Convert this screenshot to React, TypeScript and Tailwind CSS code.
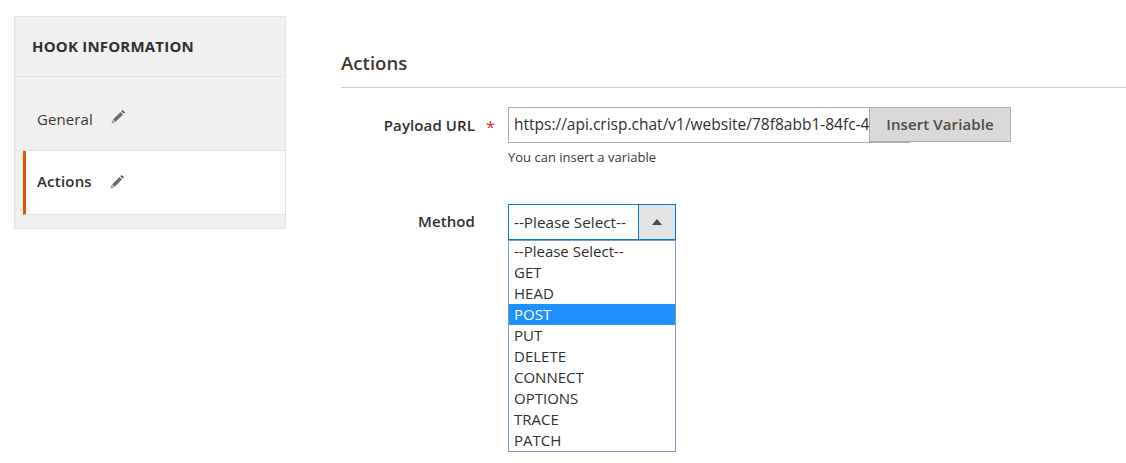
const methods = ['--Please Select--', 'GET', 'HEAD', 'POST', 'PUT', 'DELETE', 'CONNECT', 'OPTIONS', 'TRACE', 'PATCH'];

function Pencil() {
  return (
    <svg width="16" height="16" viewBox="0 0 16 16" className="shrink-0">
      <path d="M12.6 1l2.4 2.4-1.2 1.2-2.4-2.4z" fill="#514943" />
      <path d="M10.6 3l2.4 2.4-7.6 7.6-2.4-2.4z" fill="#6e6a66" />
      <path d="M2.6 11l2.4 2.4-3.6 1.2z" fill="#9a9794" />
    </svg>
  );
}

export default function App() {
  return (
    <div className="w-[1126px] h-[463px] overflow-hidden bg-white flex items-start font-['Open_Sans',sans-serif] text-[#303030]">
      {/* Sidebar */}
      <aside className="w-[272px] ml-[14px] mt-[16px] shrink-0 bg-[#f0f0f0] border border-[#e3e3e3] pb-[13px]">
        <div className="h-[60px] border-b border-[#e3e3e3] pl-[17px] flex items-center">
          <span className="text-[15px] font-bold tracking-[0.2px] text-[#303030]">HOOK INFORMATION</span>
        </div>
        <div className="h-[74px] pl-[22px] pt-[32px] flex items-start gap-[17px] border-b border-[#e3e3e3]">
          <span className="text-[15px] leading-[21px] tracking-[0.1px] text-[#41362f]">General</span>
          <Pencil />
        </div>
        <div className="h-[64px] ml-[8px] bg-white border-l-[3px] border-[#eb5202] border-b border-b-[#e3e3e3] pl-[11px] pb-[2px] flex items-center gap-[17px]">
          <span className="text-[15px] font-semibold tracking-[0.2px] text-[#303030]">Actions</span>
          <Pencil />
        </div>
      </aside>

      {/* Main */}
      <main className="ml-[55px] flex-1 pt-[49px]">
        <h2 className="text-[18.6px] leading-[28px] font-semibold text-[#41362f] h-[39px] border-b border-[#cccccc]">Actions</h2>

        <div className="flex mt-[19px]">
          <label className="w-[134px] text-right text-[15px] tracking-[0.1px] font-semibold leading-[36px] text-[#303030]">Payload URL</label>
          <span className="w-[33px] pl-[11px] text-[#e22626] text-[16px] leading-[40px]">*</span>
          <div>
            <div className="relative w-[402px] h-[36px] border border-[#adadad] bg-white pl-[5px] text-[15.5px] leading-[33px] text-[#303030] whitespace-nowrap">
              <span className="block w-[356px] overflow-hidden">https://api.crisp.chat/v1/website/78f8abb1-84fc-4e</span>
              <button className="absolute left-[360px] -top-[1px] w-[142px] h-[35px] bg-[#d9d9d9] border border-[#adadad] text-[15px] font-semibold text-[#514943] tracking-[0.1px]">
                Insert Variable
              </button>
            </div>
            <p className="text-[13px] leading-[17px] text-[#41362f] mt-[6px]">You can insert a variable</p>
          </div>
        </div>

        <div className="flex mt-[38px]">
          <label className="w-[134px] text-right text-[15px] tracking-[0.1px] font-semibold leading-[34px] text-[#303030]">Method</label>
          <div className="ml-[33px] relative w-[168px]">
            <div className="h-[36px] flex border border-[#007bdb] bg-white">
              <span className="flex-1 pl-[5px] text-[15.3px] leading-[34px] text-[#303030]">--Please Select--</span>
              <span className="w-[37px] bg-[#e3e3e3] border-l border-[#007bdb] flex items-center justify-center">
                <span className="w-0 h-0 border-x-[5px] border-x-transparent border-b-[6px] border-b-[#514943]"></span>
              </span>
            </div>
            <ul className="absolute top-[36px] left-0 w-[168px] h-[212px] border border-[#7f9db9] bg-white">
              {methods.map((m) => (
                <li
                  key={m}
                  className={
                    m === 'POST'
                      ? 'h-[21px] pl-[5px] text-[15px] leading-[21px] bg-[#1e90ff] text-white'
                      : 'h-[21px] pl-[5px] text-[15px] leading-[21px] text-[#303030]'
                  }
                >
                  {m}
                </li>
              ))}
            </ul>
          </div>
        </div>
      </main>
    </div>
  );
}
